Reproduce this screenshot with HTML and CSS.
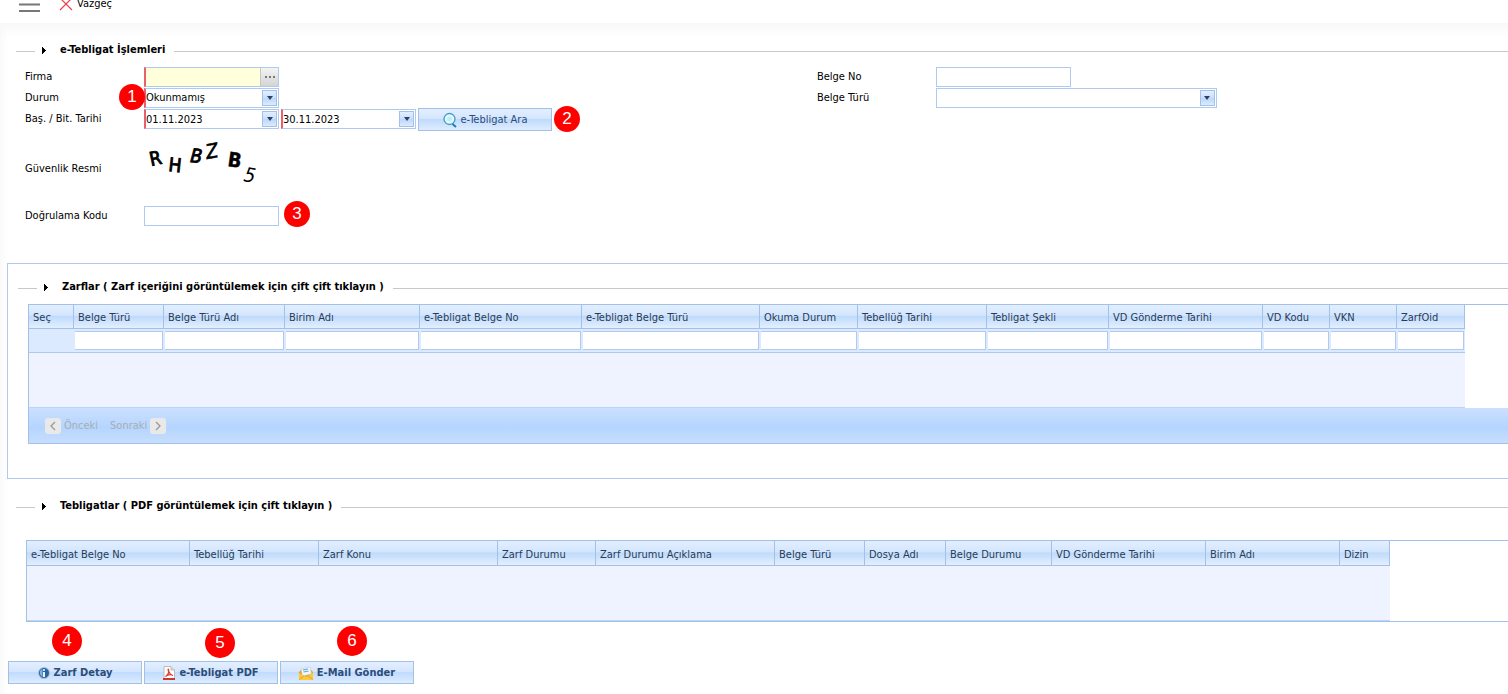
FILE: index.html
```html
<!DOCTYPE html>
<html lang="tr">
<head>
    <meta charset="UTF-8">
    <meta name="viewport" content="width=device-width, initial-scale=1.0">
    <title>e-Tebligat İşlemleri</title>
    <link rel="stylesheet" href="styles.css">
</head>
<body>
    <header class="toolbar">
        <button type="button" class="menu-button" aria-label="Menü">
            <svg width="22" height="16" viewBox="0 0 22 16"><path d="M0 2h21M0 8.500h21M0 15h21" stroke="#777" stroke-width="2"/></svg>
        </button>
        <button type="button" class="cancel-button">
            <svg width="14" height="14" viewBox="0 0 14 14"><path d="M1 1l12 12M13 1L1 13" stroke="#e8404c" stroke-width="1.2"/></svg>
            Vazgeç
        </button>
    </header>

    <main class="page">
        <form class="search">
            <h2 class="legend">e-Tebligat İşlemleri</h2>
            <div class="form-columns">
                <div class="form-column">
                    <div class="row">
                        <label for="firma">Firma</label>
                        <div class="field required lookup">
                            <input type="text" id="firma">
                            <button type="button" class="dots" aria-label="Firma seç"><i></i><i></i><i></i></button>
                        </div>
                    </div>
                    <div class="row">
                        <label for="durum">Durum</label>
                        <div class="field required">
                            <select id="durum"><option>Okunmamış</option></select>
                            <span class="arrow"></span>
                            <span class="badge badge-1">1</span>
                        </div>
                    </div>
                    <div class="row">
                        <label for="baslangic">Baş. / Bit. Tarihi</label>
                        <div class="field required">
                            <input type="text" id="baslangic" value="01.11.2023">
                            <button type="button" class="arrow" aria-label="Başlangıç tarihi seç"></button>
                        </div>
                        <div class="field required">
                            <input type="text" value="30.11.2023" aria-label="Bitiş tarihi">
                            <button type="button" class="arrow" aria-label="Bitiş tarihi seç"></button>
                        </div>
                        <div class="action">
                            <button type="button" class="button">
                                <svg width="14" height="16" viewBox="0 0 14 16"><circle cx="6.5" cy="7" r="5.5" fill="#e6f7fb" stroke="#3c9dcc" stroke-width="1.3"/><circle cx="6.5" cy="7" r="2.5" fill="#c4ebf3"/><path d="M9.500 12l3.500 3" stroke="#1b7fb5" stroke-width="2"/></svg>
                                e-Tebligat Ara
                            </button>
                            <span class="badge badge-2">2</span>
                        </div>
                    </div>
                    <div class="row captcha-row">
                        <span class="label">Güvenlik Resmi</span>
                        <svg class="captcha" width="120" height="52" viewBox="0 0 120 52" role="img" aria-label="Güvenlik resmi">
                            <text transform="translate(7 29) rotate(-12)" font-size="19" stroke="#000" stroke-width=".9">R</text>
                            <text transform="translate(24 34) rotate(6)" font-size="19" stroke="#000" stroke-width=".9">H</text>
                            <text transform="translate(46 25) rotate(5)" font-size="19" font-style="italic" stroke="#000" stroke-width=".9">B</text>
                            <text transform="translate(63 22) rotate(-10)" font-size="20" font-style="italic" stroke="#000" stroke-width=".6">Z</text>
                            <text transform="translate(83 29) rotate(8)" font-size="20" font-weight="bold" stroke="#000" stroke-width=".4">B</text>
                            <text transform="translate(99 44) rotate(10)" font-size="20" font-style="italic">5</text>
                        </svg>
                    </div>
                    <div class="row">
                        <label for="kod">Doğrulama Kodu</label>
                        <div class="field">
                            <input type="text" id="kod">
                            <span class="badge badge-3">3</span>
                        </div>
                    </div>
                </div>
                <div class="form-column">
                    <div class="row">
                        <label for="belge-no">Belge No</label>
                        <div class="field"><input type="text" id="belge-no"></div>
                    </div>
                    <div class="row">
                        <label for="belge-turu">Belge Türü</label>
                        <div class="field wide">
                            <select id="belge-turu"><option></option></select>
                            <span class="arrow"></span>
                        </div>
                    </div>
                </div>
            </div>
        </form>

        <section class="envelopes">
            <h2 class="legend">Zarflar ( Zarf içeriğini görüntülemek için çift çift tıklayın )</h2>
            <div class="grid">
                <table>
                    <colgroup>
                        <col width="45"><col width="90"><col width="121"><col width="135"><col width="162"><col width="178"><col width="98"><col width="129"><col width="122"><col width="154"><col width="67"><col width="67"><col width="68">
                    </colgroup>
                    <thead>
                        <tr>
                            <th>Seç</th>
                            <th>Belge Türü</th>
                            <th>Belge Türü Adı</th>
                            <th>Birim Adı</th>
                            <th>e-Tebligat Belge No</th>
                            <th>e-Tebligat Belge Türü</th>
                            <th>Okuma Durum</th>
                            <th>Tebellüğ Tarihi</th>
                            <th>Tebligat Şekli</th>
                            <th>VD Gönderme Tarihi</th>
                            <th>VD Kodu</th>
                            <th>VKN</th>
                            <th>ZarfOid</th>
                        </tr>
                        <tr class="filters">
                            <td></td>
                            <td><input type="text" aria-label="Belge Türü"></td>
                            <td><input type="text" aria-label="Belge Türü Adı"></td>
                            <td><input type="text" aria-label="Birim Adı"></td>
                            <td><input type="text" aria-label="e-Tebligat Belge No"></td>
                            <td><input type="text" aria-label="e-Tebligat Belge Türü"></td>
                            <td><input type="text" aria-label="Okuma Durum"></td>
                            <td><input type="text" aria-label="Tebellüğ Tarihi"></td>
                            <td><input type="text" aria-label="Tebligat Şekli"></td>
                            <td><input type="text" aria-label="VD Gönderme Tarihi"></td>
                            <td><input type="text" aria-label="VD Kodu"></td>
                            <td><input type="text" aria-label="VKN"></td>
                            <td><input type="text" aria-label="ZarfOid"></td>
                        </tr>
                    </thead>
                    <tbody>
                        <tr><td class="empty" colspan="13"></td></tr>
                    </tbody>
                </table>
                <div class="pager">
                    <button type="button" disabled>
                        <svg width="16" height="16" viewBox="0 0 16 16"><rect width="16" height="16" rx="3" fill="#e9e9e9"/><path d="M10 4L6 8l4 4" fill="none" stroke="#999" stroke-width="1.300"/></svg>
                        Önceki
                    </button>
                    <button type="button" disabled>
                        Sonraki
                        <svg width="16" height="16" viewBox="0 0 16 16"><rect width="16" height="16" rx="3" fill="#e9e9e9"/><path d="M6 4l4 4-4 4" fill="none" stroke="#999" stroke-width="1.300"/></svg>
                    </button>
                </div>
            </div>
        </section>

        <section class="notices">
            <h2 class="legend">Tebligatlar ( PDF görüntülemek için çift tıklayın )</h2>
            <div class="grid">
                <table>
                    <colgroup>
                        <col width="163"><col width="129"><col width="179"><col width="98"><col width="179"><col width="90"><col width="81"><col width="106"><col width="154"><col width="134"><col width="50">
                    </colgroup>
                    <thead>
                        <tr>
                            <th>e-Tebligat Belge No</th>
                            <th>Tebellüğ Tarihi</th>
                            <th>Zarf Konu</th>
                            <th>Zarf Durumu</th>
                            <th>Zarf Durumu Açıklama</th>
                            <th>Belge Türü</th>
                            <th>Dosya Adı</th>
                            <th>Belge Durumu</th>
                            <th>VD Gönderme Tarihi</th>
                            <th>Birim Adı</th>
                            <th>Dizin</th>
                        </tr>
                    </thead>
                    <tbody>
                        <tr><td class="empty" colspan="11"></td></tr>
                    </tbody>
                </table>
            </div>
        </section>

        <div class="actions">
            <div class="action">
                <button type="button" class="button strong">
                    <svg width="12" height="12" viewBox="0 0 12 12"><circle cx="6" cy="6" r="5.500" fill="#2464a4" stroke="#b5c3d2"/><path d="M2 4a5 5 0 0 1 2.500-2v8a5 5 0 0 1-2.500-3z" fill="#7db4e2"/><circle cx="6" cy="3" r="1" fill="#fff"/><path d="M6 5v5" stroke="#fff" stroke-width="1.800"/></svg>
                    Zarf Detay
                </button>
                <span class="badge large badge-4">4</span>
            </div>
            <div class="action">
                <button type="button" class="button strong">
                    <svg width="12" height="14" viewBox="0 0 12 14"><path d="M1 .5h7l3.500 3.500v9.500H1z" fill="#fff" stroke="#bbb"/><path d="M8 .5V4h3.500" fill="#ddd" stroke="#bbb"/><path d="M2.500 10.500C5 9 6.500 5.500 5.500 3.500S5 8 10 9.500C7.500 8 4 9 2.500 10.500z" fill="none" stroke="#e0362c" stroke-width="1.200"/><path d="M0 12h12v2H0z" fill="#c9382f"/></svg>
                    e-Tebligat PDF
                </button>
                <span class="badge large badge-5">5</span>
            </div>
            <div class="action">
                <button type="button" class="button strong">
                    <svg width="14" height="14" viewBox="0 0 14 14"><path d="M0 6l2-2h10l2 2v7H0z" fill="#e7a521"/><path d="M2 3l9-2 1.500 7-9 2z" fill="#f3f6f8" stroke="#b9c7d0" stroke-width=".5"/><path d="M4 4l5-1M4.500 6l5-1" stroke="#58a9d8" stroke-width="1.200"/><path d="M0 7l7 4 7-4v7H0z" fill="#ffc83d"/><path d="M0 13.500l5-3.500M14 13.500L9 10" stroke="#d99413" stroke-width=".7"/></svg>
                    E-Mail Gönder
                </button>
                <span class="badge large badge-6">6</span>
            </div>
        </div>
    </main>
</body>
</html>
```

FILE: styles.css
```css
* {
    box-sizing: border-box;
}
body {
    margin: 0;
    font-family: "DejaVu Sans Condensed", "DejaVu Sans", sans-serif;
    font-stretch: condensed;
    font-size: 11px;
    line-height: 14px;
    color: #000;
    background-color: #fff;
    overflow-x: hidden;
}
button, input, select {
    font: inherit;
    color: inherit;
    margin: 0;
    padding: 0;
    border: none;
    background: none;
}

/* Top bar */
.toolbar {
    display: flex;
    align-items: center;
    gap: 18px;
    height: 40px;
    margin-top: -17px;
    padding: 1px 0 0 19px;
    background-color: #fff;
}
.toolbar button {
    display: flex;
    align-items: center;
    gap: 4px;
}

.page {
    padding: 18px 0 10px 8px;
    background: linear-gradient(#f8f8f8, rgba(255, 255, 255, 0) 14px), linear-gradient(to right, #fafafa, #fff 8px);
}

/* Section titles with a rule on each side */
.legend {
    display: flex;
    align-items: center;
    margin: 0;
    padding: 1px 0 0 8px;
    height: 17px;
    font-size: 11px;
    font-weight: bold;
    white-space: nowrap;
}
.legend::before {
    content: "";
    width: 44px;
    height: 10px;
    background:
        linear-gradient(#c8c8c8, #c8c8c8) 0 6px / 19px 1px no-repeat,
        conic-gradient(from 225deg at 100% 50%, #000 90deg, transparent 0) 26px 2px / 4px 7px no-repeat;
}
.legend::after {
    content: "";
    flex: 1;
    height: 1px;
    margin: 3px 0 0 9px;
    background-color: #c8c8c8;
}

/* Search form */
.form-columns {
    display: grid;
    grid-template-columns: 53.4% 1fr;
    padding: 8px 0 0 17px;
}
.row {
    display: flex;
    align-items: center;
    gap: 2px;
    height: 21px;
}
.row label,
.row .label {
    width: 117px;
}
.field {
    position: relative;
    display: flex;
    align-items: center;
    width: 135px;
    height: 20px;
    border: 1px solid #aecaf0;
}
.field.required {
    border-left: 2px solid #e8606c;
}
.field.wide {
    width: 281px;
}
.field input,
.field select {
    flex: 1;
    min-width: 0;
    height: 18px;
    padding: 1px 0 0;
    appearance: none;
}
.lookup {
    background-color: #ffffdc;
}
.dots {
    display: flex;
    align-items: center;
    justify-content: center;
    gap: 2px;
    width: 18px;
    height: 18px;
    border-left: 1px solid #c8c8c8;
    background: linear-gradient(#f4f4f4, #d4d4d4);
}
.dots i {
    width: 2px;
    height: 2px;
    background-color: #777;
}
.arrow {
    display: flex;
    align-items: center;
    justify-content: center;
    width: 15px;
    height: 16px;
    margin-right: 1px;
    border: 1px solid #a3c0e8;
    background: linear-gradient(#e3eeff, #c8dffc 50%, #b9d7fb 51%, #dcebff);
    pointer-events: none;
}
.arrow::before {
    content: "";
    border: 3px solid transparent;
    border-top: 4px solid #2f415f;
    border-bottom: none;
}
.captcha-row {
    height: 76px;
    padding-top: 3px;
}
.captcha {
    margin-bottom: 12px;
    font-family: "DejaVu Sans", sans-serif;
}

/* Buttons */
.action {
    position: relative;
}
.row .action {
    padding-top: 2px;
}
.button {
    display: flex;
    align-items: center;
    justify-content: center;
    gap: 4px;
    width: 134px;
    height: 23px;
    border: 1px solid #a3c0e8;
    background: linear-gradient(#e3efff, #d3e5fe 48%, #bfdbfe 50%, #dfecff);
    color: #2c4d79;
}
.strong {
    font-weight: bold;
}

/* Step markers */
.badge {
    position: absolute;
    width: 26px;
    height: 26px;
    border-radius: 50%;
    background-color: #f00;
    color: #fff;
    font-family: "Liberation Sans", Arial, sans-serif;
    font-size: 17px;
    line-height: 26px;
    text-align: center;
    pointer-events: none;
}
.badge.large {
    width: 30px;
    height: 30px;
    line-height: 30px;
}
.badge-1 {
    right: 133px;
    top: -5px;
}
.badge-2 {
    left: 136px;
    top: 0;
}
.badge-3 {
    left: 139px;
    top: -6px;
}
.badge-4 {
    left: 44px;
    bottom: 28px;
}
.badge-5 {
    left: 61px;
    bottom: 26px;
}
.badge-6 {
    left: 57px;
    bottom: 28px;
}

/* Data grids */
.envelopes {
    margin: 37px 0 0 -1px;
    padding: 14px 0 34px 2px;
    border: 1px solid #aecaf0;
    border-right: none;
    background-color: #fff;
}
.grid {
    border: 1px solid #a3c0e8;
    border-right: none;
}
.envelopes .grid {
    margin: 9px 0 0 18px;
}
table {
    width: 1px;
    table-layout: fixed;
    border-collapse: separate;
    border-spacing: 0;
}
th {
    height: 24px;
    padding: 2px 4px 0;
    border-right: 1px solid #a3c0e8;
    border-bottom: 1px solid #a3c0e8;
    background: linear-gradient(#e3efff, #d3e5fe 45%, #bfdbfb 50%, #e3efff);
    color: #283b56;
    font-weight: normal;
    text-align: left;
    white-space: nowrap;
}
.filters td {
    height: 24px;
    padding: 0 1px;
    border-bottom: 1px solid #aecaf0;
    background-color: #dbeaff;
}
.filters input {
    display: block;
    width: 100%;
    height: 19px;
    border: 1px solid #aecaf0;
    border-left: none;
    background-color: #fff;
}
.empty {
    height: 55px;
    padding: 0;
    border-bottom: 1px solid #b9d6f5;
    background-color: #eef3ff;
}
.pager {
    display: flex;
    align-items: center;
    gap: 12px;
    height: 35px;
    padding-left: 16px;
    background: linear-gradient(#cce0ff, #b5d5ff 55%, #c7deff);
}
.pager button {
    display: flex;
    align-items: center;
    gap: 3px;
    color: #a9adb3;
}
.notices {
    padding-top: 18px;
}
.notices .grid {
    margin: 26px 0 0 18px;
}
.notices th {
    height: 25px;
    padding-top: 3px;
}
.actions {
    display: flex;
    gap: 2px;
    margin-top: 39px;
}
```
